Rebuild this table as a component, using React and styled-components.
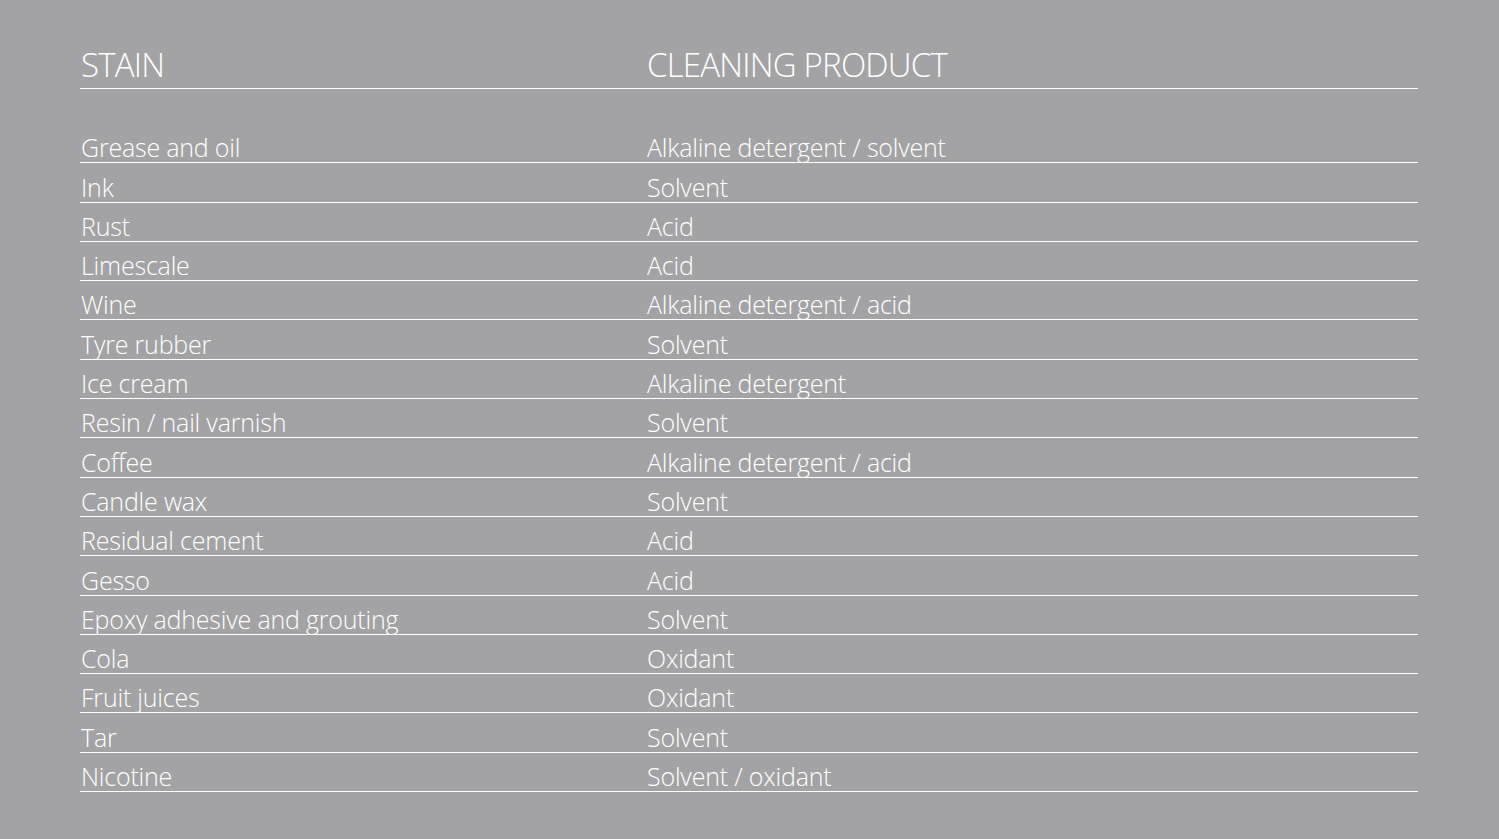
import React from "react";
import styled, { createGlobalStyle } from "styled-components";

const Global = createGlobalStyle`
  html, body { margin: 0; padding: 0; background: #a3a3a5; }
  body { font-family: "Open Sans", "Noto Sans", sans-serif; color: #ffffff; }
`;

const Page = styled.div`
  width: 1499px;
  height: 839px;
  box-sizing: border-box;
  padding: 45px 81px 0 80px;
  background: #a3a3a5;
`;

const Table = styled.div`
  display: flex;
  flex-direction: column;
`;

const HeaderRow = styled.div`
  display: grid;
  grid-template-columns: 566px 1fr;
  height: 44px;
  box-sizing: border-box;
  border-bottom: 1px solid #ffffff;
  align-items: end;
  margin-bottom: 35px;
`;

const HeaderCell = styled.div`
  font-size: 33px;
  font-weight: 300;
  line-height: 40px;
  letter-spacing: -0.8px;
  padding: 0 0 3px 1px;
  white-space: nowrap;
`;

const Row = styled.div`
  display: grid;
  grid-template-columns: 566px 1fr;
  height: 39.3px;
  box-sizing: border-box;
  border-bottom: 1px solid #ffffff;
  align-items: end;
`;

const Cell = styled.div`
  font-size: 25px;
  font-weight: 300;
  line-height: 30px;
  letter-spacing: -0.2px;
  padding-left: 1px;
  white-space: nowrap;
`;

const rows = [
  ["Grease and oil", "Alkaline detergent / solvent"],
  ["Ink", "Solvent"],
  ["Rust", "Acid"],
  ["Limescale", "Acid"],
  ["Wine", "Alkaline detergent / acid"],
  ["Tyre rubber", "Solvent"],
  ["Ice cream", "Alkaline detergent"],
  ["Resin / nail varnish", "Solvent"],
  ["Coffee", "Alkaline detergent / acid"],
  ["Candle wax", "Solvent"],
  ["Residual cement", "Acid"],
  ["Gesso", "Acid"],
  ["Epoxy adhesive and grouting", "Solvent"],
  ["Cola", "Oxidant"],
  ["Fruit juices", "Oxidant"],
  ["Tar", "Solvent"],
  ["Nicotine", "Solvent / oxidant"],
];

export default function App() {
  return (
    <Page>
      <Global />
      <Table>
        <HeaderRow>
          <HeaderCell>STAIN</HeaderCell>
          <HeaderCell>CLEANING PRODUCT</HeaderCell>
        </HeaderRow>
        {rows.map(([stain, product]) => (
          <Row key={stain}>
            <Cell>{stain}</Cell>
            <Cell>{product}</Cell>
          </Row>
        ))}
      </Table>
    </Page>
  );
}
